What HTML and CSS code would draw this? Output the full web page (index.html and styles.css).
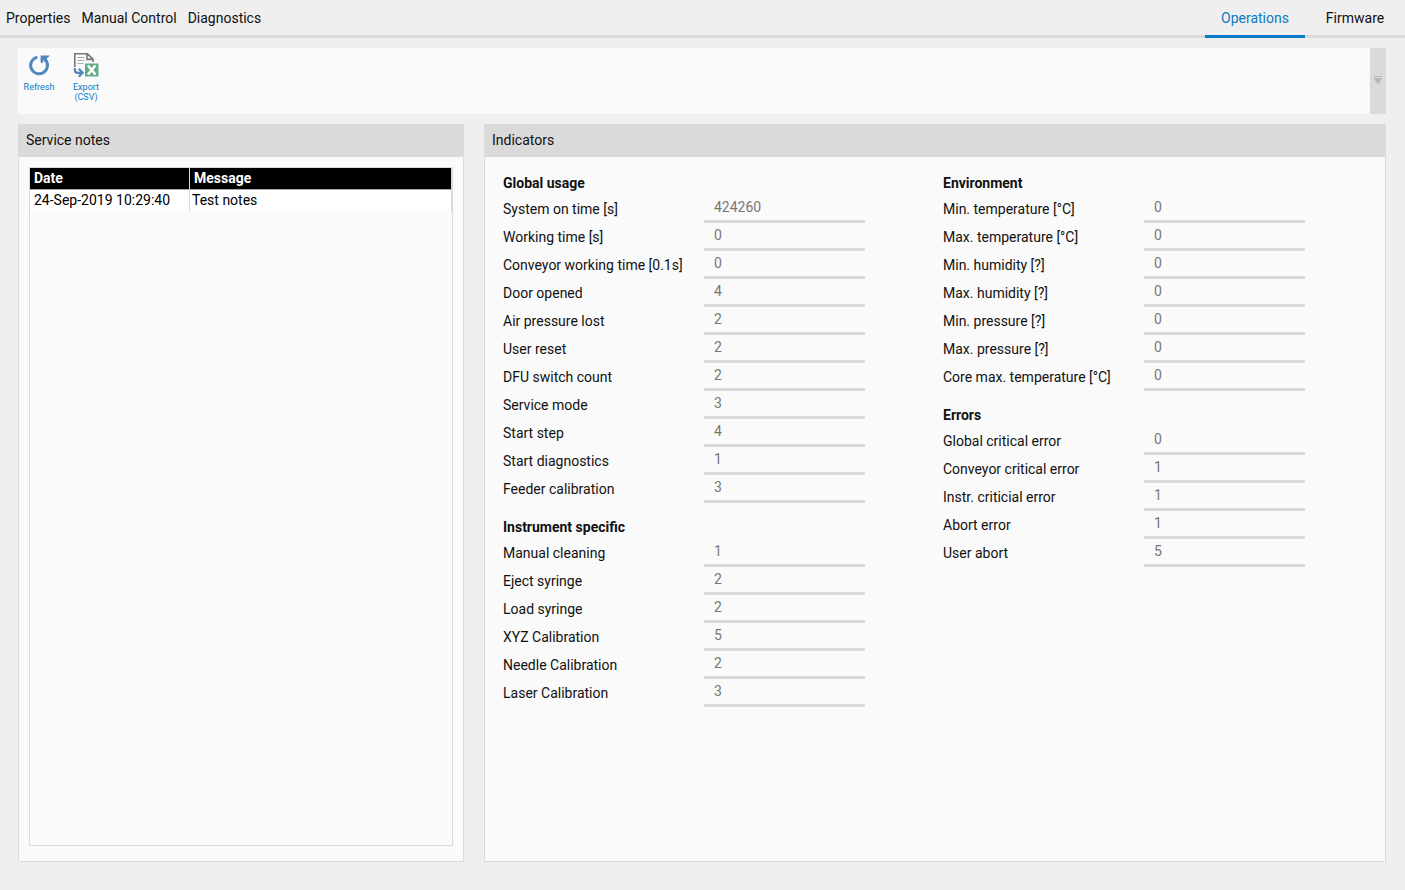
FILE: index.html
```
<!DOCTYPE html>
<html lang="en">
<head>
    <meta charset="UTF-8">
    <meta name="viewport" content="width=device-width, initial-scale=1.0">
    <title>Operations</title>
    <link rel="stylesheet" href="styles.css">
</head>
<body>
    <header class="top-bar">
        <nav class="menu">
            <a href="#properties">Properties</a>
            <a href="#manual">Manual Control</a>
            <a href="#diagnostics">Diagnostics</a>
        </nav>
        <nav class="tabs">
            <a href="#operations" class="active">Operations</a>
            <a href="#firmware">Firmware</a>
        </nav>
    </header>

    <div class="toolbar">
        <button type="button" class="tool">
            <svg width="26" height="26" viewBox="0 0 26 26">
                <path d="M11.4 5.1A8.4 8.4 0 1 0 19.2 7.6" fill="none" stroke="#5087c0" stroke-width="3"/>
                <path d="M14.6 3.4H24l-1.8 1.8-1.6 1.4.8 2.2-2.6 1-1.6-2V10.8h-2.6z" fill="#5087c0"/>
            </svg>
            <span>Refresh</span>
        </button>
        <button type="button" class="tool">
            <svg width="26" height="26" viewBox="0 0 26 26">
                <path d="M1.8 15V1.8h12.6l5.6 5.4V10M14 2v5.4h6" fill="none" stroke="#777" stroke-width="1.6"/>
                <path d="M4.5 5.5h7M4.5 8.5h7M4.5 11.5h6" stroke="#aaa" stroke-width="1.2"/>
                <path d="M1.9 16v2q0 2.8 2.8 2.8H8.6M5.8 16.8l3.8 4-3.8 4" fill="none" stroke="#5087c0" stroke-width="2.2"/>
                <rect x="12" y="11.5" width="13.5" height="13" fill="#60ad87"/>
                <path d="M15 13.5l7.4 9M22.4 13.5l-7.4 9" stroke="#fff" stroke-width="2.6"/>
            </svg>
            <span>Export<br>(CSV)</span>
        </button>
        <button type="button" class="overflow" aria-label="More tools">
            <svg width="8" height="8" viewBox="0 0 8 8">
                <path d="M0 0h8v1H0zM0 2h8v1L5 7v1H3V7L0 3z" fill="#b8b8b8"/>
            </svg>
        </button>
    </div>

    <main class="content">
        <section class="panel notes">
            <h2>Service notes</h2>
            <div class="notes-list">
                <table>
                    <thead>
                        <tr><th class="date">Date</th><th>Message</th></tr>
                    </thead>
                    <tbody>
                        <tr><td class="date">24-Sep-2019 10:29:40</td><td>Test notes</td></tr>
                    </tbody>
                </table>
            </div>
        </section>

        <section class="panel indicators">
            <h2>Indicators</h2>
            <div class="columns">
                <div class="column">
                    <div class="group">
                        <h3>Global usage</h3>
                        <div class="row"><label for="onTime">System on time [s]</label><input type="text" id="onTime" value="424260" readonly></div>
                        <div class="row"><label for="workTime">Working time [s]</label><input type="text" id="workTime" value="0" readonly></div>
                        <div class="row"><label for="conveyorTime">Conveyor working time [0.1s]</label><input type="text" id="conveyorTime" value="0" readonly></div>
                        <div class="row"><label for="door">Door opened</label><input type="text" id="door" value="4" readonly></div>
                        <div class="row"><label for="airLost">Air pressure lost</label><input type="text" id="airLost" value="2" readonly></div>
                        <div class="row"><label for="userReset">User reset</label><input type="text" id="userReset" value="2" readonly></div>
                        <div class="row"><label for="dfu">DFU switch count</label><input type="text" id="dfu" value="2" readonly></div>
                        <div class="row"><label for="service">Service mode</label><input type="text" id="service" value="3" readonly></div>
                        <div class="row"><label for="startStep">Start step</label><input type="text" id="startStep" value="4" readonly></div>
                        <div class="row"><label for="startDiag">Start diagnostics</label><input type="text" id="startDiag" value="1" readonly></div>
                        <div class="row"><label for="feeder">Feeder calibration</label><input type="text" id="feeder" value="3" readonly></div>
                    </div>
                    <div class="group">
                        <h3>Instrument specific</h3>
                        <div class="row"><label for="cleaning">Manual cleaning</label><input type="text" id="cleaning" value="1" readonly></div>
                        <div class="row"><label for="eject">Eject syringe</label><input type="text" id="eject" value="2" readonly></div>
                        <div class="row"><label for="load">Load syringe</label><input type="text" id="load" value="2" readonly></div>
                        <div class="row"><label for="xyz">XYZ Calibration</label><input type="text" id="xyz" value="5" readonly></div>
                        <div class="row"><label for="needle">Needle Calibration</label><input type="text" id="needle" value="2" readonly></div>
                        <div class="row"><label for="laser">Laser Calibration</label><input type="text" id="laser" value="3" readonly></div>
                    </div>
                </div>
                <div class="column">
                    <div class="group">
                        <h3>Environment</h3>
                        <div class="row"><label for="minTemp">Min. temperature [°C]</label><input type="text" id="minTemp" value="0" readonly></div>
                        <div class="row"><label for="maxTemp">Max. temperature [°C]</label><input type="text" id="maxTemp" value="0" readonly></div>
                        <div class="row"><label for="minHum">Min. humidity [?]</label><input type="text" id="minHum" value="0" readonly></div>
                        <div class="row"><label for="maxHum">Max. humidity [?]</label><input type="text" id="maxHum" value="0" readonly></div>
                        <div class="row"><label for="minPress">Min. pressure [?]</label><input type="text" id="minPress" value="0" readonly></div>
                        <div class="row"><label for="maxPress">Max. pressure [?]</label><input type="text" id="maxPress" value="0" readonly></div>
                        <div class="row"><label for="coreTemp">Core max. temperature [°C]</label><input type="text" id="coreTemp" value="0" readonly></div>
                    </div>
                    <div class="group">
                        <h3>Errors</h3>
                        <div class="row"><label for="globalErr">Global critical error</label><input type="text" id="globalErr" value="0" readonly></div>
                        <div class="row"><label for="conveyorErr">Conveyor critical error</label><input type="text" id="conveyorErr" value="1" readonly></div>
                        <div class="row"><label for="instrErr">Instr. criticial error</label><input type="text" id="instrErr" value="1" readonly></div>
                        <div class="row"><label for="abortErr">Abort error</label><input type="text" id="abortErr" value="1" readonly></div>
                        <div class="row"><label for="userAbort">User abort</label><input type="text" id="userAbort" value="5" readonly></div>
                    </div>
                </div>
            </div>
        </section>
    </main>
</body>
</html>
```
FILE: styles.css
```
* {
    box-sizing: border-box;
}
body {
    display: flex;
    flex-direction: column;
    min-height: 100vh;
    margin: 0;
    background-color: #efefef;
    color: #111;
    font-family: Roboto, "Liberation Sans", sans-serif;
    font-size: 14px;
    line-height: 20px;
}
a {
    color: inherit;
    text-decoration: none;
}
button, input {
    font: inherit;
    border: 0;
    padding: 0;
    margin: 0;
}
h2, h3 {
    margin: 0;
    font-size: 14px;
}
/* top navigation */
.top-bar {
    display: flex;
    justify-content: space-between;
    height: 38px;
    box-shadow: inset 0 -3px #dadada;
}
.menu, .tabs {
    display: flex;
    line-height: 36px;
}
.menu {
    gap: 11px;
    padding-left: 6px;
}
.tabs a {
    width: 100px;
    text-align: center;
}
.tabs .active {
    color: #0a7bc4;
    border-bottom: 3px solid #0a7bc4;
}
/* toolbar */
.toolbar {
    display: flex;
    height: 66px;
    margin: 10px 19px 10px 18px;
    background-color: #fafafa;
}
.tool {
    display: flex;
    flex-direction: column;
    align-items: center;
    gap: 4px;
    width: 42px;
    margin-right: 5px;
    padding-top: 4px;
    background: none;
    color: #0a7bc4;
    font-size: 9px;
    line-height: 10px;
}
.overflow {
    display: flex;
    align-items: center;
    justify-content: center;
    width: 16px;
    margin-left: auto;
    padding-bottom: 2px;
    background-color: #dadada;
}
/* panels */
.content {
    display: flex;
    flex: 1;
    gap: 20px;
    margin: 0 19px 28px 18px;
}
.panel {
    display: flex;
    flex-direction: column;
    border: 1px solid #dadada;
    background-color: #fafafa;
}
.panel h2 {
    height: 32px;
    padding-left: 7px;
    background-color: #dadada;
    font-weight: normal;
    line-height: 30px;
}
.notes {
    flex: 0 0 446px;
}
.indicators {
    flex: 1;
}
.notes-list {
    flex: 1;
    margin: 10px 10px 15px;
    border: 1px solid #dadada;
}
.notes-list table {
    width: 100%;
    border-collapse: separate;
    border-spacing: 0;
    color: #000;
}
.notes-list th, .notes-list td {
    height: 22px;
    padding: 0 4px 2px;
    border-right: 1px solid #dadada;
    line-height: 18px;
    text-align: left;
}
.notes-list th {
    border-bottom: 1px solid #aaa;
    background-color: #000;
    color: #fff;
}
.notes-list td {
    padding: 0 2px 2px;
    background-color: #fff;
}
.notes-list .date {
    width: 160px;
    padding-left: 4px;
}
/* indicators */
.columns {
    display: flex;
    gap: 78px;
    padding: 14px 18px;
}
.group {
    margin-bottom: 12px;
}
.group h3 {
    height: 24px;
    line-height: 24px;
}
.row {
    display: grid;
    grid-template-columns: 201px 161px;
    align-items: center;
    height: 28px;
}
.row input {
    width: 100%;
    height: 28px;
    padding: 0 0 2px 10px;
    border-bottom: 3px solid #dadada;
    background: none;
    color: #777;
}
```
